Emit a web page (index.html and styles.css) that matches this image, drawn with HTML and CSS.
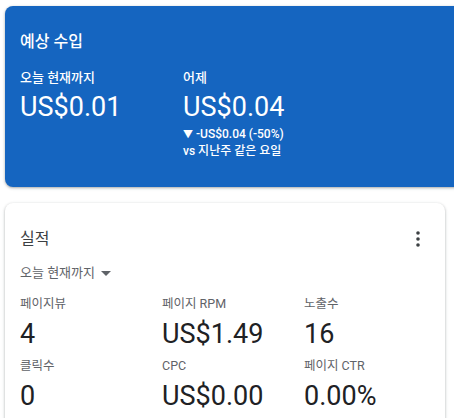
FILE: index.html
```html
<!DOCTYPE html>
<html lang="ko">
<head>
<meta charset="utf-8">
<link rel="stylesheet" href="styles.css">
</head>
<body>
<div class="page">
  <section class="card earnings">
    <h2 class="title">예상 수입</h2>
    <div class="cols">
      <div class="col">
        <div class="label">오늘 현재까지</div>
        <div class="amount">US$0.01</div>
      </div>
      <div class="col">
        <div class="label">어제</div>
        <div class="amount">US$0.04</div>
        <div class="delta"><span class="tri">▼</span> -US$0.04 (-50%)</div>
        <div class="delta">vs 지난주 같은 요일</div>
      </div>
    </div>
  </section>
  <section class="card perf">
    <div class="perf-head">
      <h2 class="perf-title">실적</h2>
      <svg class="kebab" width="4" height="16" viewBox="0 0 4 16"><circle cx="2" cy="2" r="1.8" fill="#3c4043"/><circle cx="2" cy="8" r="1.8" fill="#3c4043"/><circle cx="2" cy="14" r="1.8" fill="#3c4043"/></svg>
    </div>
    <div class="range">오늘 현재까지 <svg class="caret" width="10" height="5" viewBox="0 0 10 5"><path d="M0 0h10L5 5z" fill="#5f6368"/></svg></div>
    <div class="grid">
      <div class="metric"><div class="m-label">페이지뷰</div><div class="m-value">4</div></div>
      <div class="metric"><div class="m-label">페이지 RPM</div><div class="m-value">US$1.49</div></div>
      <div class="metric"><div class="m-label">노출수</div><div class="m-value">16</div></div>
      <div class="metric"><div class="m-label">클릭수</div><div class="m-value">0</div></div>
      <div class="metric"><div class="m-label">CPC</div><div class="m-value">US$0.00</div></div>
      <div class="metric"><div class="m-label">페이지 CTR</div><div class="m-value">0.00%</div></div>
    </div>
  </section>
</div>
</body>
</html>
```
FILE: styles.css
```css
html, body {
  margin: 0;
  padding: 0;
  background: #ffffff;
  overflow: hidden;
}
body {
  font-family: Roboto, "Noto Sans CJK KR", sans-serif;
}
.page {
  padding: 6px 0 0 5px;
  display: flex;
  flex-direction: column;
  gap: 16px;
  width: 440px;
}
.card {
  border-radius: 8px;
  box-shadow: 0 1px 2px rgba(60,64,67,0.3), 0 1px 3px 1px rgba(60,64,67,0.12);
}
.earnings {
  background: #1565c0;
  color: #ffffff;
  width: 470px;
  height: 181px;
  box-sizing: border-box;
  padding: 24px 15px 0 15px;
}
.title {
  margin: 0;
  font-size: 16px;
  font-weight: 500;
  line-height: 24px;
}
.cols {
  display: flex;
  margin-top: 14px;
}
.col {
  width: 163px;
}
.label {
  font-size: 13px;
  font-weight: 500;
  line-height: 20px;
}
.amount {
  font-size: 27px;
  font-weight: 400;
  line-height: 36px;
  margin-top: 1px;
  margin-bottom: 1px;
}
.delta {
  font-size: 12px;
  font-weight: 500;
  line-height: 17px;
}
.tri {
  font-size: 10px;
}
.perf {
  background: #ffffff;
  height: 260px;
  box-sizing: border-box;
  padding: 24px 15px 0 15px;
  color: #202124;
}
.perf-head {
  display: flex;
  justify-content: space-between;
  align-items: center;
  padding-right: 10px;
}
.perf-title {
  margin: 0;
  font-size: 16px;
  font-weight: 400;
  line-height: 24px;
  color: #3c4043;
}
.range {
  margin-top: 12px;
  font-size: 13px;
  line-height: 20px;
  color: #5f6368;
  display: flex;
  align-items: center;
  gap: 6px;
}
.grid {
  margin-top: 11px;
  display: grid;
  grid-template-columns: 142px 142px 1fr;
  row-gap: 4px;
}
.m-label {
  font-size: 12.5px;
  line-height: 20px;
  color: #5f6368;
}
.m-value {
  font-size: 27px;
  line-height: 36px;
  color: #202124;
  margin-top: 2px;
}
```
